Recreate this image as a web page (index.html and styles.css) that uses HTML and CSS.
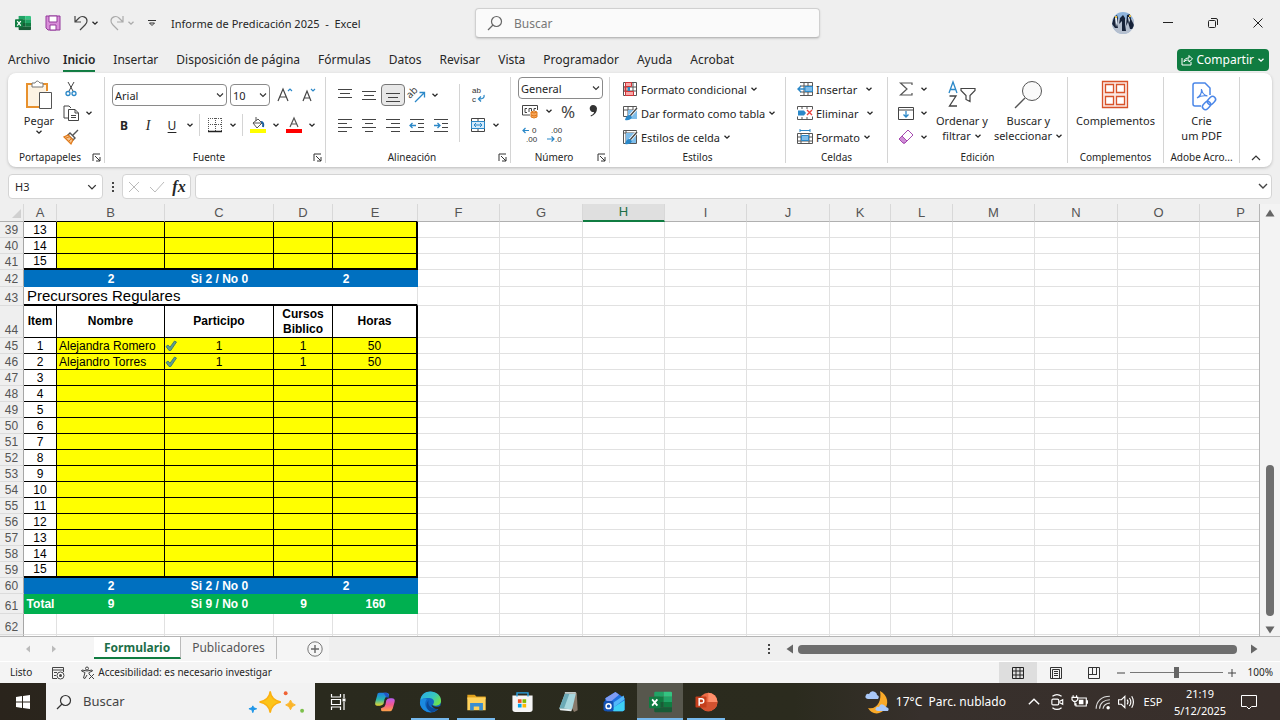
FILE: index.html
```html
<!DOCTYPE html>
<html lang="es">
<head>
    <meta charset="UTF-8">
    <meta name="viewport" content="width=device-width, initial-scale=1.0">
    <title>Informe de Predicación 2025 - Excel</title>
    <link rel="stylesheet" href="styles.css">
</head>
<body>
    <!-- shared symbols -->
    <svg class="symbols" aria-hidden="true">
        <symbol id="chev" viewBox="0 0 8 8"><path d="M1.5 2.8 4 5.2 6.5 2.8" fill="none" stroke="currentColor" stroke-width="1.3"/></symbol>
        <symbol id="launch" viewBox="0 0 9 9"><path d="M1 8V1h7M3 3l5 5M8 4v4H4" fill="none" stroke="#333"/></symbol>
        <symbol id="excel" viewBox="0 0 22 20">
            <path d="M6 0h8v5H5V1z" fill="#21a366"/><path d="M14 0h7l1 1v4h-8z" fill="#33c481"/>
            <path d="M5 5h9v5H5z" fill="#107c41"/><path d="M14 5h8v5h-8z" fill="#21a366"/>
            <path d="M5 10h9v5H5z" fill="#185c37"/><path d="M14 10h8v5h-8z" fill="#107c41"/>
            <path d="M5 15h17v4l-1 1H6l-1-1z" fill="#185c37"/>
            <rect y="5" width="11" height="11" rx="1" fill="#107c41"/>
            <path d="m3 7.500 5 6M8 7.500l-5 6" stroke="#fff" stroke-width="1.700"/>
        </symbol>
        <symbol id="search" viewBox="0 0 16 16"><circle cx="9.500" cy="6.500" r="5" fill="none" stroke="currentColor" stroke-width="1.200"/><path d="M6 10 1 15" stroke="currentColor" stroke-width="1.200"/></symbol>
        <symbol id="check" viewBox="0 0 12 12"><path d="M1 6.500 3 5l2 2.200L9.500 1 11.500 2 5.800 10.500H4z" fill="#5f9e94" stroke="#34706b" stroke-width=".8"/></symbol>
    </svg>

    <header class="titlebar">
        <div class="quick">
            <svg class="i16" viewBox="0 0 22 20"><use href="#excel"/></svg>
            <button class="q-save" aria-label="Guardar"><svg class="i16" viewBox="0 0 16 16"><path d="M1 1h14v14H3l-2-2z" fill="#d98fd9" stroke="#93399b"/><path d="M4 1h8v6H4zM5 10h6v5H5z" fill="#fff" stroke="#93399b"/></svg></button>
            <button class="q-undo" aria-label="Deshacer"><svg class="i16" viewBox="0 0 16 16"><path d="M2 1v6h6M2 7l4-4c3-3 8-1 8 3 0 2-1 3-2 4l-5 5" fill="none" stroke="#444" stroke-width="1.200"/></svg><svg class="chev"><use href="#chev"/></svg></button>
            <button class="q-undo off" aria-label="Rehacer"><svg class="i16" viewBox="0 0 16 16"><path d="M14 1v6H8M14 7l-4-4C7 0 2 2 2 6c0 2 1 3 2 4l5 5" fill="none" stroke="#aaa" stroke-width="1.200"/></svg><svg class="chev"><use href="#chev"/></svg></button>
            <button class="q-more" aria-label="Personalizar"><svg class="chev" viewBox="0 0 8 8"><path d="M0 1.500h8M1.500 4 4 6.500 6.500 4z" fill="none" stroke="#333"/></svg></button>
            <h1>Informe de Predicación 2025&nbsp; -&nbsp; Excel</h1>
        </div>
        <label class="find"><svg class="i16"><use href="#search"/></svg><input type="text" placeholder="Buscar" aria-label="Buscar"></label>
        <div class="window">
            <svg class="avatar" viewBox="0 0 22 22">
                <defs><clipPath id="face"><circle cx="11" cy="11" r="11"/></clipPath></defs>
                <g clip-path="url(#face)"><path d="M0 0h22v22H0z" fill="#8fb4dc"/><path d="M0 7h22v15H0z" fill="#b5bfce"/>
                <path d="M2 5 5 3l1 3-1 6 1 4H3L0 12zM8 6l3-3 2 3v6l1 7h-4V9l-3 3zM15 3l3-1 1 5 3 6v4h-4l-2-7-2 4z" fill="#172339"/>
                <path d="M3 6 5 5v6l-1 4zM16 5h1l1 3-1 3z" fill="#e5edf5"/><path d="M3 4h2v2H3zM17 3h2v2h-2z" fill="#e5bd4b"/></g>
            </svg>
            <button aria-label="Minimizar"><svg viewBox="0 0 10 10"><path d="M0 4.500h10" stroke="#222"/></svg></button>
            <button aria-label="Restaurar"><svg viewBox="0 0 10 10"><rect x=".5" y="2.500" width="7" height="7" rx="1" fill="none" stroke="#222"/><path d="M3 .5h5q1.500 0 1.500 1.500v5" fill="none" stroke="#222"/></svg></button>
            <button aria-label="Cerrar"><svg viewBox="0 0 10 10"><path d="m.5.5 9 9m0-9-9 9" stroke="#222"/></svg></button>
        </div>
    </header>

    <nav class="tabs">
        <a href="#">Archivo</a>
        <a href="#" class="active">Inicio</a>
        <a href="#">Insertar</a>
        <a href="#">Disposición de página</a>
        <a href="#">Fórmulas</a>
        <a href="#">Datos</a>
        <a href="#">Revisar</a>
        <a href="#">Vista</a>
        <a href="#">Programador</a>
        <a href="#">Ayuda</a>
        <a href="#">Acrobat</a>
        <button class="share"><svg viewBox="0 0 12 12"><path d="M1 4v7h9V8M3 8c0-3 2-4 5-4V1.500L11.500 5 8 8V6C6 6 4 6 3 8z" fill="none" stroke="#fff"/></svg>Compartir<svg class="chev"><use href="#chev"/></svg></button>
    </nav>

    <section class="ribbon">
        <div class="group g-clip">
            <div class="body">
                <button class="big"><svg viewBox="0 0 28 30"><path d="M8 4H2v23h12" fill="none" stroke="#e8912d" stroke-width="2"/><path d="M3 5h19v8h-8v13H3z" fill="#fdf3e3"/><path d="M17 4h5v7" fill="none" stroke="#e8912d" stroke-width="2"/><path d="M7 7V3h3q2-4 5 0h3v4z" fill="#fff" stroke="#777"/><path d="M14.500 12.500h12v16h-12z" fill="#fff" stroke="#555"/></svg>Pegar<svg class="chev"><use href="#chev"/></svg></button>
                <div class="stack">
                    <div class="row"><button aria-label="Cortar"><svg viewBox="0 0 16 16"><path d="M5 1l5 9M11 1 6 10" stroke="#444" fill="none"/><circle cx="5" cy="12.500" r="2" fill="none" stroke="#2b88c8" stroke-width="1.300"/><circle cx="11" cy="12.500" r="2" fill="none" stroke="#2b88c8" stroke-width="1.300"/></svg></button></div>
                    <div class="row"><button aria-label="Copiar"><svg viewBox="0 0 16 16"><path d="M5 13H1V1h5l2 2" fill="none" stroke="#444"/><path d="M5.500 4.500H12L15.500 8v7.500h-10zM12 4.500V8h3.500M8 10.500h5M8 12.500h5" fill="#fff" stroke="#444"/></svg></button><button class="drop" aria-label="Opciones de copiar"><svg class="chev"><use href="#chev"/></svg></button></div>
                    <div class="row"><button aria-label="Copiar formato"><svg viewBox="0 0 16 16"><path d="M15 1 10 6M7 4l5 5-2 2-5-5z" fill="#fff" stroke="#555" stroke-width="1.400"/><path d="M5 6 1 8l7 7 2-4z" fill="#f6c28c" stroke="#e07b1c" stroke-width="1.300"/><path d="m3 9 3-1M6 12l2-2" stroke="#e07b1c"/></svg></button></div>
                </div>
            </div>
            <footer><span>Portapapeles</span><svg class="launch"><use href="#launch"/></svg></footer>
        </div>

        <div class="group g-font">
            <div class="body lines">
                <div class="row wide">
                    <select class="f-name" aria-label="Fuente"><option>Arial</option></select>
                    <select class="f-size" aria-label="Tamaño"><option>10</option></select>
                    <button aria-label="Aumentar tamaño"><svg viewBox="0 0 16 16"><path d="M1 14 6 2l5 12M3 10h6" fill="none" stroke="#444" stroke-width="1.200"/><path d="m11 4 2-2 2 2" fill="none" stroke="#2b88c8" stroke-width="1.200"/></svg></button>
                    <button aria-label="Disminuir tamaño"><svg viewBox="0 0 16 16"><path d="M2 14 6 4l4 10M3.500 11h5" fill="none" stroke="#444" stroke-width="1.200"/><path d="m10 2 2 2 2-2" fill="none" stroke="#2b88c8" stroke-width="1.200"/></svg></button>
                </div>
                <div class="row">
                    <button class="b">B</button><button class="it">I</button><button class="u">U</button><button class="drop" aria-label="Tipo de subrayado"><svg class="chev"><use href="#chev"/></svg></button>
                    <i class="bar"></i>
                    <button aria-label="Bordes"><svg viewBox="0 0 16 16"><path d="M1 1.500h14M1.500 1v13M14.500 1v13M8.500 1v13M1 7.500h14" stroke="#555" stroke-dasharray="1 1"/><path d="M1 14.500h14" stroke="#222" stroke-width="1.500"/></svg></button><button class="drop" aria-label="Más bordes"><svg class="chev"><use href="#chev"/></svg></button>
                    <i class="bar"></i>
                    <button aria-label="Color de relleno"><svg viewBox="0 0 16 16"><path d="m3 6 5-4 4 4-5 5zM6 0v4M3 6h8" fill="#fff" stroke="#555"/><path d="M11 5q3 0 2 5" fill="none" stroke="#1c5f9e" stroke-width="2"/><path d="M0 12h16v4H0z" fill="#ff0"/></svg></button><button class="drop" aria-label="Más rellenos"><svg class="chev"><use href="#chev"/></svg></button>
                    <button aria-label="Color de fuente"><svg viewBox="0 0 16 16"><path d="M4 10 8 1l4 9M5.500 7h5" fill="none" stroke="#555" stroke-width="1.200"/><path d="M0 12h16v4H0z" fill="red"/></svg></button><button class="drop" aria-label="Más colores"><svg class="chev"><use href="#chev"/></svg></button>
                </div>
            </div>
            <footer><span>Fuente</span><svg class="launch"><use href="#launch"/></svg></footer>
        </div>

        <div class="group g-align">
            <div class="body">
                <div class="lines">
                    <div class="row wide">
                        <button aria-label="Alinear arriba"><svg viewBox="0 0 16 16"><path d="M1 2.500h14M3 6.500h10M1 10.500h14" stroke="#444"/></svg></button>
                        <button aria-label="Alinear al medio"><svg viewBox="0 0 16 16"><path d="M1 4.500h14M3 8.500h10M1 12.500h14" stroke="#444"/></svg></button>
                        <button class="on" aria-label="Alinear abajo"><svg viewBox="0 0 16 16"><path d="M1 6.500h14M3 10.500h10M1 14.500h14" stroke="#444"/></svg></button>
                        <button aria-label="Orientación"><svg viewBox="0 0 16 16"><text x="1" y="12" transform="rotate(-45 1 12)" font-size="10" fill="#444">ab</text><path d="m6 15 9-9M10.500 5.500h5v5" fill="none" stroke="#2b88c8" stroke-width="1.300"/></svg></button><button class="drop" aria-label="Más orientación"><svg class="chev"><use href="#chev"/></svg></button>
                    </div>
                    <div class="row">
                        <button aria-label="Izquierda"><svg viewBox="0 0 16 16"><path d="M1 2.500h14M1 6.500h9M1 10.500h14M1 14.500h9" stroke="#444"/></svg></button>
                        <button aria-label="Centro"><svg viewBox="0 0 16 16"><path d="M1 2.500h14M4 6.500h8M1 10.500h14M4 14.500h8" stroke="#444"/></svg></button>
                        <button aria-label="Derecha"><svg viewBox="0 0 16 16"><path d="M1 2.500h14M6 6.500h9M1 10.500h14M6 14.500h9" stroke="#444"/></svg></button>
                        <button aria-label="Disminuir sangría"><svg viewBox="0 0 16 16"><path d="M1 2.500h14M9 6.500h6M9 10.500h6M1 14.500h14" stroke="#444"/><path d="M7 8.500H1M3.500 6 1 8.500 3.500 11" fill="none" stroke="#2b88c8" stroke-width="1.300"/></svg></button>
                        <button aria-label="Aumentar sangría"><svg viewBox="0 0 16 16"><path d="M1 2.500h14M9 6.500h6M9 10.500h6M1 14.500h14" stroke="#444"/><path d="M1 8.500h6M4.500 6 7 8.500 4.500 11" fill="none" stroke="#2b88c8" stroke-width="1.300"/></svg></button>
                    </div>
                </div>
                <i class="bar tall"></i>
                <div class="lines">
                    <div class="row wide"><button aria-label="Ajustar texto"><svg class="glyphs" viewBox="0 0 16 16"><text x="2" y="6">ab</text><text x="2" y="15">c</text><path d="M14 8q1 4-5 4M11 9.500 8.500 12l2.500 2.500" fill="none" stroke="#2b88c8" stroke-width="1.300"/></svg></button></div>
                    <div class="row"><button aria-label="Combinar y centrar"><svg viewBox="0 0 16 16"><path d="M1.500 1.500h13v13h-13zM8 1v3M8 12v3" fill="#fff" stroke="#444"/><path d="M1.500 4.500h13v7h-13z" fill="#d5eafa" stroke="#2b88c8"/><path d="M4 8h8M6 6 4 8l2 2M10 6l2 2-2 2" fill="none" stroke="#2b88c8"/></svg></button><button class="drop" aria-label="Más combinar"><svg class="chev"><use href="#chev"/></svg></button></div>
                </div>
            </div>
            <footer><span>Alineación</span><svg class="launch"><use href="#launch"/></svg></footer>
        </div>

        <div class="group g-num">
            <div class="body stack">
                <select aria-label="Formato de número"><option>General</option></select>
                <div class="row"><button aria-label="Moneda"><svg viewBox="0 0 16 16"><path d="M8 12H.5V2.500h15V7M5 5.500H3v4h2M7 9V5.500h2.500V8M12 8V5.500h2" fill="none" stroke="#444"/><path d="M9 9v5q3 2 6 0V9z" fill="#f6a55b"/><path d="M9 9v5q3 2 6 0V9q-3-2-6 0 3 2 6 0M9 12q3 2 6 0" fill="none" stroke="#e07b1c"/></svg></button><button class="drop" aria-label="Más moneda"><svg class="chev"><use href="#chev"/></svg></button><button class="pct">%</button><button aria-label="Millares"><svg viewBox="0 0 16 16"><path d="M8 2a3.500 3.500 0 1 0 1 6.900Q9 11 5.500 12.500l.5 1Q12 11 12 5.500 11.500 2 8 2z" fill="#333"/></svg></button></div>
                <div class="row"><button aria-label="Aumentar decimales"><svg class="glyphs" viewBox="0 0 16 16"><text x="10" y="6">0</text><text x="4" y="15">.00</text><path d="M7 3.500H1M3.500 1 1 3.500 3.500 6" fill="none" stroke="#2b88c8" stroke-width="1.200"/></svg></button><button aria-label="Disminuir decimales"><svg class="glyphs" viewBox="0 0 16 16"><text x="4" y="6">.00</text><text x="8" y="15">.0</text><path d="M0 12h7M4.500 9.500 7 12l-2.500 2.500" fill="none" stroke="#2b88c8" stroke-width="1.200"/></svg></button></div>
            </div>
            <footer><span>Número</span><svg class="launch"><use href="#launch"/></svg></footer>
        </div>

        <div class="group g-styles">
            <div class="body stack">
                <button class="item"><svg viewBox="0 0 16 16"><path d="M1.500 1.500h13v13h-13zM6 1v14M11 1v14M1 6h14M1 10h14" fill="#fff" stroke="#555"/><path d="M3.500 1.500h6v4h-6zM3.500 10.500h8v4h-8z" fill="#f7a8a8" stroke="#d13438"/><path d="M3.500 5v6" stroke="#d13438" stroke-width="2"/><path d="M6 6h2v4H6z" fill="#2b88c8"/></svg>Formato condicional<svg class="chev"><use href="#chev"/></svg></button>
                <button class="item"><svg viewBox="0 0 16 16"><path d="M1.500 1.500h13v10h-13zM6 1v13M11 1v10M1 5h14" fill="#fff" stroke="#555"/><path d="M6 5h9v9H6z" fill="#7fbdea"/><path d="m15 3-7 8" stroke="#fff" stroke-width="3"/><path d="m15 3-7 8" stroke="#444" stroke-width="1.400"/><path d="M8 10q-4 0-5 5 5 1 7-3z" fill="#2b88c8"/></svg>Dar formato como tabla<svg class="chev"><use href="#chev"/></svg></button>
                <button class="item"><svg viewBox="0 0 16 16"><path d="M1.500 1.500h13v13h-13zM4 1v14M1 4h14" fill="#fff" stroke="#555"/><path d="M4 4h10v10H4z" fill="#7fbdea"/><path d="m15 3-7 8" stroke="#fff" stroke-width="3"/><path d="m15 3-7 8" stroke="#444" stroke-width="1.400"/><path d="M8 10q-4 0-5 5 5 1 7-3z" fill="#2b88c8"/></svg>Estilos de celda<svg class="chev"><use href="#chev"/></svg></button>
            </div>
            <footer><span>Estilos</span></footer>
        </div>

        <div class="group g-cells">
            <div class="body stack">
                <button class="item split"><svg viewBox="0 0 16 16"><path d="M3 1.500h12.500v13H3M7 1v14M11 1v14M3 5h12M3 11h12" fill="none" stroke="#555"/><path d="M8 5.500h7.500v5H8z" fill="#7fbdea" stroke="#2b88c8"/><path d="M8 8H1M4 5 1 8l3 3" fill="none" stroke="#2b88c8" stroke-width="1.400"/></svg><span>Insertar</span><svg class="chev"><use href="#chev"/></svg></button>
                <button class="item split"><svg viewBox="0 0 16 16"><path d="M.5 4.500v-3h15v3M.5 11.500v3h15v-3M5 1v3M10 1v3M5 12v3M10 12v3" fill="none" stroke="#555"/><path d="M1 5.500h6L9 8l-2 2.500H1z" fill="#2b88c8"/><path d="m10 5 5 5m0-5-5 5" stroke="#e8403c" stroke-width="1.300"/></svg><span>Eliminar</span><svg class="chev"><use href="#chev"/></svg></button>
                <button class="item"><svg viewBox="0 0 16 16"><path d="M.5 4.500h15v10H.5zM4 4v11M12 4v11M1 8h14M1 12h14" fill="none" stroke="#555"/><path d="M4.500 6.500h7v5h-7z" fill="#7fbdea" stroke="#2b88c8"/><path d="M3 1.500h10M3 0v3M13 0v3" stroke="#2b88c8"/></svg>Formato<svg class="chev"><use href="#chev"/></svg></button>
            </div>
            <footer><span>Celdas</span></footer>
        </div>

        <div class="group g-edit">
            <div class="body">
                <div class="stack">
                    <div class="row"><button aria-label="Autosuma"><svg viewBox="0 0 16 16"><path d="M14 4V2H2.500L9 8l-6.500 6H14v-2" fill="none" stroke="#555" stroke-width="1.200"/></svg></button><button class="drop" aria-label="Más funciones"><svg class="chev"><use href="#chev"/></svg></button></div>
                    <div class="row"><button aria-label="Rellenar"><svg viewBox="0 0 16 16"><path d="M.5 2.500h15v12H.5zM0 5h16" fill="none" stroke="#444"/><path d="M8 6v6M5.500 9.500 8 12l2.500-2.500" fill="none" stroke="#2b88c8" stroke-width="1.300"/></svg></button><button class="drop" aria-label="Más rellenar"><svg class="chev"><use href="#chev"/></svg></button></div>
                    <div class="row"><button aria-label="Borrar"><svg viewBox="0 0 16 16"><path d="m10 1 5 5-8 8H5L1 10z" fill="#fff" stroke="#a64bb0"/><path d="m4 7 5 5-2 2H5l-4-4z" fill="#cf8cd6" stroke="#a64bb0"/></svg></button><button class="drop" aria-label="Más borrar"><svg class="chev"><use href="#chev"/></svg></button></div>
                </div>
                <button class="big sort"><svg viewBox="0 0 28 30"><path d="m1 13 4-11 4 11M2.500 9.500h5" fill="none" stroke="#2b88c8" stroke-width="1.300"/><path d="M1.500 16H8L1.500 26H9" fill="none" stroke="#444" stroke-width="1.300"/><path d="M13 8.500h14v2l-5 5v6l-4-2v-4l-5-5z" fill="none" stroke="#444" stroke-width="1.200"/></svg><span>Ordenar y<br>filtrar <svg class="chev"><use href="#chev"/></svg></span></button>
                <button class="big"><svg viewBox="0 0 28 30"><circle cx="18" cy="11" r="9.500" fill="#fafafa" stroke="#555"/><path d="M11 18 1 28" stroke="#555" stroke-width="1.300"/></svg><span>Buscar y<br>seleccionar <svg class="chev"><use href="#chev"/></svg></span></button>
            </div>
            <footer><span>Edición</span></footer>
        </div>

        <div class="group g-addin">
            <div class="body"><button class="big"><svg viewBox="0 0 28 30"><path d="M1.500 1.500h25v26h-25z" fill="#fbe9e4" stroke="#d8532a" stroke-width="1.300"/><path d="M4.500 4.500h8v8h-8zM15.500 4.500h8v8h-8zM4.500 16.500h8v8h-8zM15.500 16.500h8v8h-8z" fill="#fff" stroke="#d8532a" stroke-width="1.300"/></svg>Complementos</button></div>
            <footer><span>Complementos</span></footer>
        </div>

        <div class="group g-adobe">
            <div class="body"><button class="big"><svg viewBox="0 0 28 30"><path d="M13 26H7q-2 0-2-2V5q0-2 2-2h10l5 5v7" fill="none" stroke="#4a86e8" stroke-width="1.500"/><path d="M9 18q5-3 4.500-9 1 6 6 7-6-1-10.500 2z" fill="none" stroke="#4a86e8" stroke-width="1.200"/><g transform="rotate(-45 21 23)" fill="none" stroke="#4a86e8" stroke-width="1.500"><rect x="13" y="20" width="9" height="6" rx="3"/><rect x="20" y="20" width="9" height="6" rx="3"/></g></svg><span>Crie<br>um PDF</span></button></div>
            <footer><span>Adobe Acro...</span></footer>
        </div>
        <button class="collapse" aria-label="Contraer"><svg viewBox="0 0 10 10"><path d="m1 7 4-4 4 4" fill="none" stroke="#333" stroke-width="1.200"/></svg></button>
    </section>

    <section class="formula">
        <select class="name-box" aria-label="Cuadro de nombres"><option>H3</option></select>
        <svg class="dots" viewBox="0 0 4 12"><path d="M1 1h2v2H1zM1 5h2v2H1zM1 9h2v2H1z" fill="#444"/></svg>
        <div class="fx">
            <button aria-label="Cancelar"><svg viewBox="0 0 14 14"><path d="m2 2 10 10M12 2 2 12" stroke="#bbb"/></svg></button>
            <button aria-label="Introducir"><svg viewBox="0 0 14 14"><path d="m0 7 5 5 9-10" fill="none" stroke="#bbb"/></svg></button>
            <button class="fn">fx</button>
        </div>
        <label class="entry"><input type="text" aria-label="Barra de fórmulas"><svg viewBox="0 0 10 10"><path d="m1 2 4 4 4-4" fill="none" stroke="#444" stroke-width="1.400"/></svg></label>
    </section>

    <main class="sheet">
        <div class="cells">
            <table>
                <colgroup id="cols"></colgroup>
                <thead><tr id="letters"></tr></thead>
                <tbody id="rows"></tbody>
            </table>
        </div>
        <div class="vscroll">
            <svg viewBox="0 0 10 10"><path d="M5 1.500 9.500 8.500h-9z" fill="#666"/></svg>
            <div class="track"><div class="thumb"></div></div>
            <svg viewBox="0 0 10 10"><path d="M5 8.500.5 1.500h9z" fill="#666"/></svg>
        </div>
    </main>

    <div class="sheetbar">
        <div class="sheets">
            <button class="arrow" aria-label="Anterior"><svg viewBox="0 0 10 10"><path d="M7 1.500v7L3 5z" fill="#bbb"/></svg></button>
            <button class="arrow" aria-label="Siguiente"><svg viewBox="0 0 10 10"><path d="M3 1.500v7L7 5z" fill="#bbb"/></svg></button>
            <a href="#" class="active">Formulario</a>
            <a href="#">Publicadores</a>
            <button class="add" aria-label="Nueva hoja"><svg viewBox="0 0 16 16"><circle cx="8" cy="8" r="7.200" fill="none" stroke="#777"/><path d="M8 4v8M4 8h8" stroke="#666" stroke-width="1.400"/></svg></button>
        </div>
        <div class="hscroll">
            <svg class="dots" viewBox="0 0 4 12"><path d="M1 1h2v2H1zM1 5h2v2H1zM1 9h2v2H1z" fill="#444"/></svg>
            <div class="track">
                <svg viewBox="0 0 10 10"><path d="M8 .5v9L1.500 5z" fill="#666"/></svg>
                <div class="thumb"></div>
                <svg viewBox="0 0 10 10"><path d="M2 .5v9L8.500 5z" fill="#666"/></svg>
            </div>
        </div>
    </div>

    <div class="status">
        <span>Listo</span>
        <svg class="i14" viewBox="0 0 14 14"><path d="M6 12.500H1.500v-11h11V6M1 4h12M3 6.500h3M3 9.500h2" fill="none" stroke="#444"/><circle cx="9.500" cy="9.500" r="3.500" fill="#fff" stroke="#444"/><circle cx="9.500" cy="9.500" r="1.500" fill="#444"/></svg>
        <button class="access"><svg class="i14" viewBox="0 0 14 14"><circle cx="6" cy="2.500" r="1.500" fill="none" stroke="#444"/><path d="M1 4q5 2 10 0l.5 1L8 6.500V8M1 4l-.5 1L4 6.500 2.500 12l1.500.5L6 9M8 8l5 5m0-5-5 5" fill="none" stroke="#444"/></svg>Accesibilidad: es necesario investigar</button>
        <div class="views">
            <button class="on" aria-label="Normal"><svg viewBox="0 0 14 14"><path d="M1.500 1.500h11v11h-11zM5 1v12M9 1v12M1 5h12M1 9h12" fill="none" stroke="#222"/></svg></button>
            <button aria-label="Diseño de página"><svg viewBox="0 0 14 14"><path d="M1.500 1.500h11v11h-11zM3.500 3.500h7v9h-7zM5 5.500h4M5 7.500h4M5 9.500h4" fill="none" stroke="#333"/></svg></button>
            <button aria-label="Saltos de página"><svg viewBox="0 0 14 14"><path d="M1.500 1.500h11v11h-11zM5.500 1v7M9.500 1v7M1 8.500h9" fill="none" stroke="#333"/></svg></button>
        </div>
        <div class="zoom">
            <button aria-label="Alejar"><svg viewBox="0 0 8 8"><path d="M0 4h8" stroke="#444"/></svg></button>
            <input type="range" min="0" max="100" value="50" aria-label="Zoom">
            <button aria-label="Acercar"><svg viewBox="0 0 8 8"><path d="M0 4h8M4 0v8" stroke="#444"/></svg></button>
            <button class="level">100%</button>
        </div>
    </div>

    <footer class="taskbar">
        <button class="app" aria-label="Inicio"><svg class="i16" viewBox="0 0 16 16"><path d="m1 3 6-1v5.500H1zM8 2l7-1v6.500H8zM1 8.500h6V14l-6-1zM8 8.500h7V15l-7-1z" fill="#fff"/></svg></button>
        <label class="start-find">
            <svg class="i16"><use href="#search"/></svg>
            <input type="text" placeholder="Buscar" aria-label="Buscar en Windows">
            <svg class="sparks" viewBox="0 0 60 26"><path d="M24 2q1 9 11 11-10 2-11 11-1-9-11-11 10-2 11-11z" fill="#fcc419" stroke="#fbb011" stroke-width="1.500"/><path d="M45 11q1 4 5 5-4 1-5 5-1-4-5-5 4-1 5-5z" fill="#fbb52b" stroke="#fbb52b"/><path d="m6 17 1 2 3 1-3 1-1 3-1-3-3-1 3-1z" fill="#1e96e8" stroke="#1e96e8"/><circle cx="40" cy="4" r="2" fill="#ef6234"/><circle cx="57" cy="22" r="2" fill="#7cc04b"/></svg>
        </label>
        <button class="app" aria-label="Vista de tareas"><svg class="i16" viewBox="0 0 16 16"><path d="M1.500 0v3h9V0M1.500 16v-3h9v3M1.500 5.500h9v5h-9zM14 0v4M14 8v8" fill="none" stroke="#fff" stroke-width="1.200"/><path d="M12.500 4.500h3v3h-3z" fill="#fff"/></svg></button>
        <button class="app" aria-label="Copilot"><svg viewBox="0 0 24 24">
            <defs><linearGradient id="cp1" x2="0" y2="1"><stop stop-color="#1c7fe8"/><stop offset=".5" stop-color="#25b5b0"/><stop offset="1" stop-color="#e8d52e"/></linearGradient><linearGradient id="cp2" x2="0" y2="1"><stop stop-color="#b85cf0"/><stop offset=".5" stop-color="#f2588f"/><stop offset="1" stop-color="#fca348"/></linearGradient></defs>
            <path d="M6 2h8q3 0 3 3l-2 1q-2 0-3 3l-1 5q-1 2-4 2H4q-3 0-2-4l2-7q0-3 2-3z" fill="url(#cp1)"/><path d="M18 22h-8q-2 0-2-3l2-1q2 0 3-3l1-5q1-2 4-2h2q4 0 3 4l-2 7q-1 3-3 3z" fill="url(#cp2)"/><path d="M11 2h3q2 0 3 5h-3z" fill="#2454c7"/></svg></button>
        <button class="app open" aria-label="Edge"><svg viewBox="0 0 24 24">
            <defs><linearGradient id="eg" x1="0" y1="0" x2="1" y2=".6"><stop stop-color="#2aa8e8"/><stop offset=".6" stop-color="#36c7c0"/><stop offset="1" stop-color="#6de04f"/></linearGradient></defs>
            <circle cx="12" cy="12" r="11.500" fill="#1167c4"/><path d="M1 11C1-4 24-2 23.500 11c0 5-6 6-9 4 2-2 2-6-2-7-5-1-10 0-11.500 3z" fill="url(#eg)"/><path d="M8 9c-4 5-1 12 6 14C6 24 0 18 .5 12 2 8 5 7 8 9z" fill="#1b8ae0"/><path d="M10 10c-2 6 4 11 11 8-2 3-5 5-8 5-6-3-7-9-3-13z" fill="#0c4a97"/><path d="M13 15q4 4 10 1l1 3-4 1q-6-1-7-5z" fill="#2b2a1e"/></svg></button>
        <button class="app open" aria-label="Explorador"><svg viewBox="0 0 24 24"><path d="M2 4h8l2 2h10v3H2z" fill="#e0a11c"/><path d="M2 7h20v14H2z" fill="#ffd25c"/><path d="M5 13h14v8h-4v-4H9v4H5z" fill="#3b8ed0"/></svg></button>
        <button class="app" aria-label="Store"><svg viewBox="0 0 24 24"><path d="M1 5h22v15q0 3-3 3H4q-3 0-3-3z" fill="#f5f5f5"/><path d="M7 9h4v4H7z" fill="#f25022"/><path d="M12 9h4v4h-4z" fill="#7fba00"/><path d="M7 14h4v4H7z" fill="#00a4ef"/><path d="M12 14h4v4h-4z" fill="#ffb900"/><path d="M6 6V2h12v4" fill="none" stroke="#29a6ea" stroke-width="1.500"/></svg></button>
        <button class="app" aria-label="Bloc de notas"><svg viewBox="0 0 24 24"><path d="m8 3 13-1 1 19-4 2z" fill="#88796a"/><path d="M8 3h12l-4 17-14-1z" fill="#a7d6dd"/><path d="M8 3h5L7 19H2z" fill="#6ba9b6"/><path d="m2 19 14 1-1 2-12-1z" fill="#e7eef0"/><path d="M8 2h12" stroke="#dce8ea" stroke-width="1.500"/></svg></button>
        <button class="app" aria-label="Outlook"><svg viewBox="0 0 24 24"><path d="M2 8 13 1l10 7v12q0 2-2 2H4q-2 0-2-2z" fill="#1f6fe0"/><path d="M2 8 13 1l4 3L5 14z" fill="#7f9cf5"/><path d="m9 14 13-9 1 4-12 9z" fill="#53b7fa"/><path d="m23 10-14 9 2 3h10q2 0 2-2z" fill="#3ed0f5"/><rect y="11" width="11" height="11" rx="2" fill="#1352b4"/><circle cx="5.500" cy="16.500" r="2.700" fill="none" stroke="#fff" stroke-width="1.600"/></svg></button>
        <button class="app open current" aria-label="Excel"><svg viewBox="0 0 22 20"><use href="#excel"/></svg></button>
        <button class="app open" aria-label="PowerPoint"><svg viewBox="0 0 24 24"><circle cx="14" cy="12" r="10" fill="#ed6c47"/><path d="M14 2a10 10 0 0 1 10 10H14z" fill="#ff8f6b"/><path d="M4 12h20a10 10 0 0 1-20 0z" fill="#d35230"/><rect y="6" width="12" height="12" rx="1" fill="#c43e1c"/><path d="M4 16V8.500h2.500q2.500 0 2.500 2.300T6.500 13H4" fill="none" stroke="#fff" stroke-width="1.600"/></svg></button>
        <div class="tray">
            <button class="weather"><svg viewBox="0 0 24 24"><path d="M15 1c8 4 10 14 3 20-5 4-12 3-15-3 9 2 14-7 12-17z" fill="#f9a928"/><path d="M3 9q-4-1-2-4 1-2 3-1 2-4 6-2 2 1 2 3 3 1 1 4z" fill="#a9c8f8"/><path d="M13 21q-4-1-2-3 1-2 3-1 1-4 5-2 1 1 2 2 4 1 2 4z" fill="#a9c8f8"/></svg>17°C&nbsp; Parc. nublado</button>
            <button aria-label="Iconos ocultos"><svg viewBox="0 0 14 14"><path d="m2.500 9 4.500-4.500L11.500 9" fill="none" stroke="#fff" stroke-width="1.200"/></svg></button>
            <button aria-label="Reunión"><svg viewBox="0 0 14 14"><rect x="2.500" y="4.500" width="6" height="5" rx="1" fill="none" stroke="#fff"/><path d="m9 6.500 3-1.500v4L9 7.500M3 2q4-3 8 0M3 12q4 3 8 0" fill="none" stroke="#fff"/></svg></button>
            <button aria-label="Batería"><svg viewBox="0 0 14 14"><path d="M5 3.500h7.500v7h-9V8M13.500 5.500v3M1 1v2M4 1v2M0 3h5v2L3.500 6.500h-2L0 5zM2.500 6v4" fill="none" stroke="#fff"/><path d="M6 5h4v4H6z" fill="#fff"/></svg></button>
            <button aria-label="Red"><svg viewBox="0 0 14 14"><path d="M1 13C1 6 6 2 13 2M4 13c0-5 4-8 9-8M7 13c0-3 3-5 6-5" fill="none" stroke="#ddd"/><circle cx="11.500" cy="12" r="1.500" fill="#fff"/></svg></button>
            <button aria-label="Volumen"><svg viewBox="0 0 14 14"><path d="M.5 5v4H3l3 3V2L3 5zM8 5q1.500 2 0 4M10 3.500q2.500 3.500 0 7M12 2q3 5 0 10" fill="none" stroke="#fff"/></svg></button>
            <button class="lang">ESP</button>
            <button class="clock">21:19<br>5/12/2025</button>
            <button class="note" aria-label="Notificaciones"><svg class="i16" viewBox="0 0 16 16"><path d="M.5 1.500h15v11h-5L8 15l-2.500-2.500h-5z" fill="none" stroke="#fff"/></svg></button>
        </div>
    </footer>
    <script src="script.js"></script>
</body>
</html>
```
FILE: styles.css
```css
* {
    box-sizing: border-box;
}
body {
    margin: 0;
    height: 100vh;
    display: flex;
    flex-direction: column;
    overflow: hidden;
    background: #efefef;
    color: #262626;
    font-family: "Noto Sans", sans-serif;
    font-size: 12px;
    line-height: 15px;
}
button,
input,
select {
    font: inherit;
    color: inherit;
    border: none;
    background: none;
    padding: 0;
    margin: 0;
}
button {
    display: flex;
    align-items: center;
    justify-content: center;
    white-space: nowrap;
}
input {
    min-width: 0;
    outline: none;
}
a {
    color: inherit;
    text-decoration: none;
}
svg {
    flex: none;
    overflow: visible;
}
.symbols {
    position: absolute;
    width: 0;
    height: 0;
}
.chev {
    width: 8px;
    height: 8px;
}
.i16 {
    width: 16px;
    height: 16px;
}
.i14 {
    width: 14px;
    height: 14px;
}

/* title bar */
.titlebar {
    display: grid;
    grid-template-columns: 475fr 345fr 460fr;
    align-items: center;
    height: 46px;
    flex: none;
}
.quick {
    display: flex;
    align-items: center;
    padding-left: 15px;
}
.q-save {
    margin-left: 14px;
}
.q-undo {
    margin-left: 12px;
    gap: 2px;
}
.q-undo.off {
    margin-left: 10px;
    color: #aaa;
}
.q-more {
    margin: 0 15px 0 13px;
}
.quick h1 {
    margin: 0;
    font-size: 11px;
    font-weight: 400;
    white-space: nowrap;
}
.find {
    display: flex;
    align-items: center;
    gap: 11px;
    height: 30px;
    padding: 0 11px;
    background: #fafafa;
    border: 1px solid #d0d0d0;
    border-bottom-color: #bbb;
    border-radius: 4px;
    box-shadow: 0 1px 2px #ccc;
    color: #666;
}
.find input {
    flex: 1;
}
.find input::placeholder {
    color: #777;
}
.window {
    display: flex;
    justify-content: flex-end;
    align-items: center;
}
.window .avatar {
    width: 22px;
    height: 22px;
    margin-right: 11px;
}
.window button {
    width: 45px;
    height: 30px;
}
.window button svg {
    width: 10px;
    height: 10px;
}

/* tabs */
.tabs {
    display: flex;
    align-items: center;
    gap: 18px;
    height: 27px;
    flex: none;
    padding: 0 11px 0 8px;
}
.tabs a {
    height: 24px;
    line-height: 24px;
    white-space: nowrap;
}
.tabs a:first-child {
    margin-right: -5px;
}
.tabs .active {
    font-weight: 600;
    border-bottom: 2px solid #107c41;
}
.share {
    margin-left: auto;
    height: 22px;
    padding: 0 4px;
    gap: 3px;
    background: #107c41;
    border-radius: 4px;
    color: #fff;
}
.share svg:first-child {
    width: 12px;
    height: 12px;
}

/* ribbon */
.ribbon {
    display: flex;
    flex: none;
    margin: 0 8px;
    height: 94px;
    background: #fff;
    border-radius: 8px;
    box-shadow: 0 1px 3px #bbb;
}
.group {
    flex: none;
    display: flex;
    flex-direction: column;
    margin: 4px 0;
    border-right: 1px solid #d4d4d4;
}
.body {
    flex: 1;
    display: flex;
}
.group footer {
    display: flex;
    align-items: center;
    height: 12px;
    font-size: 10px;
    line-height: 12px;
}
.group footer span {
    flex: 1;
    text-align: center;
    white-space: nowrap;
}
.launch {
    width: 9px;
    height: 9px;
    margin-right: 3px;
}
.g-clip { width: 97px; }
.g-font { width: 221px; }
.g-align { width: 185px; }
.g-num { width: 99px; }
.g-styles { width: 176px; }
.g-cells { width: 102px; }
.g-edit { width: 180px; }
.g-addin { width: 96px; }
.g-adobe { width: 76px; }
.stack {
    display: flex;
    flex-direction: column;
}
.row {
    display: flex;
    align-items: center;
    height: 24px;
}
.row button {
    width: 24px;
    height: 22px;
}
.row button.drop {
    width: 12px;
}
.row button > svg:not(.chev) {
    width: 16px;
    height: 16px;
}
.glyphs {
    font-family: "Liberation Sans", sans-serif;
    font-size: 8px;
    fill: #333;
}
.row .on {
    background: #e8e8e8;
    border: 1px solid #777;
    border-radius: 4px;
}
.lines {
    display: flex;
    flex-direction: column;
    gap: 6px;
    padding-top: 6px;
}
.bar {
    width: 1px;
    height: 22px;
    margin: 0 3px;
    background: #d4d4d4;
}
.bar.tall {
    height: 58px;
    margin: 7px 6px 0;
}
.big {
    flex-direction: column;
    justify-content: flex-start;
    padding-top: 3px;
    font-size: 11px;
    text-align: center;
}
.big > svg:first-child {
    width: 28px;
    height: 30px;
    margin-bottom: 3px;
}
.g-clip .big {
    width: 46px;
    margin-left: 8px;
}
.g-clip .stack {
    margin-left: -3px;
}
.g-font .body,
.g-align .body,
.g-num .body {
    padding-left: 7px;
}
.g-num .row {
    gap: 1px;
}
.ribbon select {
    height: 22px;
    padding: 0 2px;
    border: 1px solid #8a8a8a;
    border-radius: 4px;
    font-size: 11px;
}
select {
    appearance: none;
    background: url("data:image/svg+xml,%3Csvg xmlns='http://www.w3.org/2000/svg' viewBox='0 0 8 8'%3E%3Cpath d='M1 2.5 4 5.500 7 2.500' fill='none' stroke='%23333' stroke-width='1.100'/%3E%3C/svg%3E") no-repeat right 2px center / 8px 8px;
}
.f-name {
    width: 115px;
}
.ribbon .f-size {
    width: 40px;
    margin: 0 3px;
}
.g-num select {
    width: 85px;
}
.b {
    font-weight: 700;
}
.it {
    font-family: "Liberation Serif", serif;
    font-style: italic;
    font-size: 14px;
}
.u {
    text-decoration: underline;
    text-underline-offset: 2px;
}
.pct {
    font-size: 17px;
    color: #444;
}
.item {
    justify-content: flex-start;
    height: 24px;
    gap: 3px;
    font-size: 11px;
}
.item > svg:first-child {
    width: 16px;
    height: 16px;
}
.item.split span {
    margin-right: 5px;
}
.g-styles .body {
    padding-left: 12px;
}
.g-cells .body {
    padding-left: 11px;
}
.g-edit .body {
    padding-left: 6px;
    gap: 6px;
}
.g-addin .body,
.g-adobe .body {
    justify-content: center;
}
.collapse {
    flex: 1;
    align-items: flex-end;
    padding-bottom: 4px;
}
.collapse svg {
    width: 10px;
    height: 10px;
}

/* formula bar */
.formula {
    display: flex;
    align-items: center;
    flex: none;
    height: 25px;
    margin: 7px 8px 5px;
}
.name-box {
    width: 95px;
    height: 25px;
    padding-left: 6px;
    border: 1px solid #d4d4d4;
    border-radius: 4px;
    background-color: #fff;
    background-position: right 5px center;
    background-size: 10px 10px;
    font-size: 11px;
}
.dots {
    width: 4px;
    height: 12px;
}
.formula .dots {
    margin: 0 7px 0 8px;
}
.fx,
.entry {
    display: flex;
    align-items: center;
    height: 25px;
    border: 1px solid #d4d4d4;
    border-radius: 4px;
    background: #fff;
}
.fx {
    width: 69px;
    justify-content: space-around;
}
.fx svg {
    width: 14px;
    height: 14px;
}
.fn {
    font-family: "Liberation Serif", serif;
    font-style: italic;
    font-weight: 700;
    font-size: 16px;
}
.entry {
    flex: 1;
    margin-left: 4px;
    padding: 0 3px 0 6px;
}
.entry input {
    flex: 1;
}
.entry svg {
    width: 10px;
    height: 10px;
}

/* sheet */
.sheet {
    display: flex;
    flex: 1;
    min-height: 0;
    border-bottom: 1px solid #b5b5b5;
}
.cells {
    flex: 1;
    min-width: 0;
    overflow: hidden;
    background: #fff;
    border-right: 1px solid #b5b5b5;
}
table {
    width: 1282px;
    table-layout: fixed;
    border-collapse: separate;
    border-spacing: 0;
    font-family: "Liberation Sans", sans-serif;
    line-height: 14px;
    color: #000;
}
th,
td {
    padding: 0;
    border-right: 1px solid #e1e1e1;
    border-bottom: 1px solid #e1e1e1;
    text-align: center;
    white-space: nowrap;
}
thead th {
    height: 18px;
    background: #efefef;
    border-right-color: #d8d8d8;
    border-bottom-color: #b0b0b0;
    font-weight: 400;
    font-size: 13px;
    line-height: 16px;
    color: #555;
}
thead th svg {
    display: block;
    width: 9px;
    height: 9px;
    margin: 2px 2px 0 auto;
}
thead .used {
    border-bottom-color: #000;
}
thead .picked {
    background: #dfdfdf;
    border-bottom: 2px solid #107c41;
    color: #1d6f48;
}
tbody th {
    background: #efefef;
    border-right-color: #a6a6a6;
    border-bottom-color: #dcdcdc;
    font-weight: 400;
    vertical-align: bottom;
    color: #555;
}
.num,
.fill,
.head {
    border-color: #000;
}
.fill {
    background: #ff0;
}
.last {
    border-right: 2px solid #000;
}
.under td {
    border-bottom: 2px solid #000;
}
.under .free {
    border-bottom: 1px solid #e1e1e1;
}
.name {
    text-align: left;
    padding-left: 2px;
}
.mark {
    display: grid;
    grid-template-columns: 1fr auto 1fr;
    align-items: center;
}
.mark svg {
    width: 12px;
    height: 12px;
}
.head {
    font-weight: 700;
    line-height: 15px;
}
.section {
    text-align: left;
    padding-left: 3px;
    font-size: 15px;
}
.blue,
.green {
    color: #fff;
    font-weight: 700;
    border: none;
}
.blue {
    background: #0070c0;
}
.green {
    background: #00b050;
}
.vscroll {
    display: flex;
    flex-direction: column;
    align-items: center;
    width: 20px;
    padding: 4px 0 1px;
    background: #f3f3f3;
}
.vscroll svg {
    width: 10px;
    height: 10px;
}
.vscroll .track {
    flex: 1;
    display: flex;
    flex-direction: column;
    justify-content: flex-end;
    padding-bottom: 9px;
}
.thumb {
    background: #6e6e6e;
    border-radius: 4px;
}
.vscroll .thumb {
    width: 8px;
    height: 38%;
}

/* sheet tabs */
.sheetbar {
    display: flex;
    flex: none;
    height: 25px;
    border-bottom: 1px solid #fff;
}
.sheets {
    display: flex;
    align-items: center;
    width: 329px;
    padding-left: 15px;
    background: #f5f5f5;
}
.arrow {
    width: 26px;
    height: 22px;
}
.arrow svg {
    width: 10px;
    height: 10px;
}
.sheets a {
    align-self: flex-start;
    height: 22px;
    padding: 0 11px;
    border-right: 1px solid #bbb;
    line-height: 22px;
    color: #555;
}
.sheets .active {
    margin-left: 27px;
    padding: 0 10px;
    background: #fff;
    border-bottom: 2px solid #107c41;
    font-weight: 700;
    color: #1d6f48;
}
.add {
    margin-left: 30px;
}
.add svg {
    width: 16px;
    height: 16px;
}
.hscroll {
    flex: 1;
    display: flex;
    align-items: center;
    justify-content: flex-end;
    gap: 14px;
    padding-right: 21px;
}
.hscroll .track {
    display: flex;
    align-items: center;
    gap: 3px;
    width: 51%;
}
.hscroll .track svg {
    width: 10px;
    height: 10px;
}
.hscroll .thumb {
    flex: 1;
    height: 9px;
    margin-right: 9px;
}

/* status bar */
.status {
    display: flex;
    align-items: center;
    flex: none;
    height: 21px;
    padding: 0 7px 0 10px;
    background: #f4f4f4;
    font-size: 10px;
}
.status > .i14 {
    margin: 0 16px 0 19px;
}
.access {
    gap: 3px;
}
.views {
    display: flex;
    margin-left: auto;
}
.views button {
    width: 38px;
    height: 21px;
}
.views .on {
    background: #dedede;
}
.views svg {
    width: 14px;
    height: 14px;
}
.zoom {
    display: flex;
    align-items: center;
    gap: 5px;
    margin-left: 4px;
}
.zoom svg {
    width: 8px;
    height: 8px;
}
.zoom input {
    appearance: none;
    width: 93px;
    height: 12px;
    background: linear-gradient(#777, #777) center / 100% 1px no-repeat;
}
.zoom input::-webkit-slider-thumb {
    appearance: none;
    width: 5px;
    height: 11px;
    background: #666;
}
.level {
    margin-left: 7px;
}

/* taskbar */
.taskbar {
    display: flex;
    flex: none;
    height: 37px;
    background: linear-gradient(90deg, #2a241c, #2a2a1e 25%, #2b2b1e 62%, #37302c 72%, #392f2b);
    color: #fff;
}
.app {
    width: 46px;
    height: 37px;
}
.app > svg:not(.i16) {
    width: 23px;
    height: 22px;
}
.open {
    background: linear-gradient(#76b9ed, #76b9ed) center bottom / 38px 2px no-repeat;
}
.current {
    background-color: #57574d;
    background-size: 100% 2px;
}
.start-find {
    display: flex;
    align-items: center;
    width: 269px;
    padding: 0 10px;
    gap: 11px;
    background: #f2f2f2;
    color: #333;
}
.start-find input {
    flex: 1;
    font-size: 13px;
}
.start-find input::placeholder {
    color: #444;
}
.sparks {
    width: 58px;
    height: 26px;
}
.tray {
    display: flex;
    align-items: center;
    margin-left: auto;
}
.tray button {
    width: 23px;
    height: 37px;
}
.tray svg {
    width: 16px;
    height: 16px;
}
.tray .weather {
    width: auto;
    gap: 7px;
    margin-right: 16px;
    font-size: 12px;
}
.tray .weather svg {
    width: 24px;
    height: 24px;
}
.tray .lang {
    width: 32px;
    font-size: 11px;
}
.tray .clock {
    display: block;
    width: 62px;
    font-size: 11px;
    line-height: 17px;
}
.tray .note {
    width: 36px;
    margin-right: 13px;
}
```
FILE: script.js
```js
const columns = [
    ['', 24], ['A', 33], ['B', 108], ['C', 109], ['D', 59], ['E', 85],
    ['F', 82], ['G', 83], ['H', 82], ['I', 82], ['J', 83], ['K', 61],
    ['L', 62], ['M', 82], ['N', 83], ['O', 82], ['P', 82]
];
const corner = '<svg viewBox="0 0 9 9"><path d="M9 0v9H0z" fill="#d0d0d0"/></svg>';

document.getElementById('cols').innerHTML = columns
    .map(([, width]) => `<col style="width:${width}px">`).join('');
document.getElementById('letters').innerHTML = columns.map(([letter], i) => {
    const cls = letter === 'H' ? 'picked' : (i > 0 && i < 6 ? 'used' : '');
    return `<th class="${cls}">${letter || corner}</th>`;
}).join('');

const free = '<td class="free"></td>'.repeat(11);
const rows = document.getElementById('rows');

function addRow(number, height, cells, cls = '') {
    rows.insertAdjacentHTML('beforeend',
        `<tr class="${cls}" style="height:${height}px"><th>${number}</th>${cells}${free}</tr>`);
}

function item(number, n, person, cls) {
    const p = person || ['', '', '', ''];
    const mark = person
        ? `<div class="mark"><svg><use href="#check"/></svg>${p[1]}<span></span></div>` : '';
    addRow(number, 16, `<td class="num">${n}</td><td class="fill name">${p[0]}</td>` +
        `<td class="fill">${mark}</td><td class="fill">${p[2]}</td><td class="fill last">${p[3]}</td>`, cls);
}

function summary(number, height) {
    addRow(number, height, '<td class="blue"></td><td class="blue">2</td>' +
        '<td class="blue">Si 2 / No 0</td><td class="blue" colspan="2">2</td>');
}

item(39, 13);
item(40, 14);
item(41, 15, null, 'under');
summary(42, 17);
addRow(43, 19, '<td class="section" colspan="5">Precursores Regulares</td>', 'under');
addRow(44, 32, '<td class="head">Item</td><td class="head">Nombre</td><td class="head">Participo</td>' +
    '<td class="head">Cursos<br>Biblico</td><td class="head last">Horas</td>');

const people = [
    ['Alejandra Romero', 1, 1, 50],
    ['Alejandro Torres', 1, 1, 50]
];
for (let n = 1; n <= 15; n++) {
    item(44 + n, n, people[n - 1], n === 15 ? 'under' : '');
}
summary(60, 16);
addRow(61, 20, ['Total', '9', 'Si 9 / No 0', '9', '160'].map(t => `<td class="green">${t}</td>`).join(''));
addRow(62, 21, '<td></td>'.repeat(5));
addRow('', 16, '<td></td>'.repeat(5));
```
